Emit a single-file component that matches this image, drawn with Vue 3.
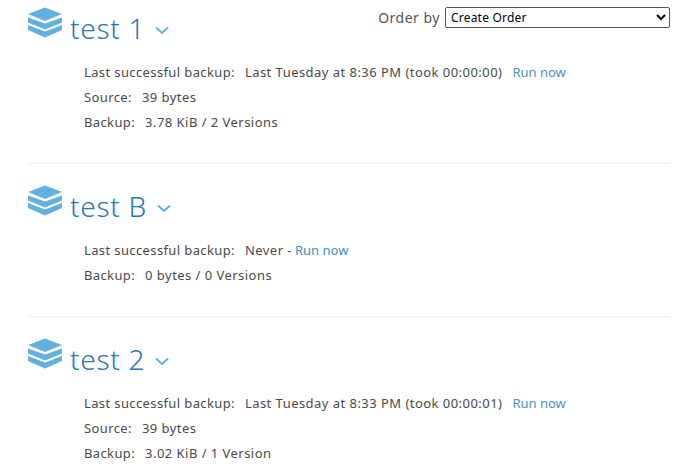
<script setup>
const items = [
  { name: 'test 1', rows: [
    { label: 'Last successful backup:', value: 'Last Tuesday at 8:36 PM (took 00:00:00)', link: true },
    { label: 'Source:', value: '39 bytes' },
    { label: 'Backup:', value: '3.78 KiB / 2 Versions' },
  ] },
  { name: 'test B', rows: [
    { label: 'Last successful backup:', value: 'Never -', link: true, tight: true },
    { label: 'Backup:', value: '0 bytes / 0 Versions' },
  ] },
  { name: 'test 2', rows: [
    { label: 'Last successful backup:', value: 'Last Tuesday at 8:33 PM (took 00:00:01)', link: true },
    { label: 'Source:', value: '39 bytes' },
    { label: 'Backup:', value: '3.02 KiB / 1 Version' },
  ] },
]
</script>

<template>
  <div class="page">
    <div class="order">
      <span class="order-label">Order by</span>
      <select class="order-select"><option>Create Order</option></select>
    </div>
    <section v-for="item in items" :key="item.name" class="item">
      <div class="head">
        <svg class="stack" width="34" height="31" viewBox="0 0 34 31">
          <path d="M17 0.500 L34 7 L17 14 L0 7 Z" fill="#62b0e0" />
          <path d="M0 10.500 L17 16.500 L34 10.500 L34 15.500 L17 22.500 L0 15.500 Z" fill="#62b0e0" />
          <path d="M0 18 L17 24.500 L34 18 L34 23 L17 30.500 L0 23 Z" fill="#62b0e0" />
        </svg>
        <h2 class="title">{{ item.name }}</h2>
        <svg class="chev" width="14" height="9" viewBox="0 0 14 9">
          <path d="M1 1.500 L7 7 L13 1.500" fill="none" stroke="#62b0e0" stroke-width="2" />
        </svg>
      </div>
      <div class="rows">
        <div v-for="row in item.rows" :key="row.label" class="row">
          <span class="label">{{ row.label }}</span>
          <span class="value">{{ row.value }}</span>
          <a v-if="row.link" class="run" :class="{ tight: row.tight }">Run now</a>
        </div>
      </div>
    </section>
  </div>
</template>

<style scoped>
.page {
  position: relative;
  width: 642px;
  height: 472px;
  overflow: hidden;
  padding: 0 4px 0 28px;
  box-sizing: content-box;
  font-family: "Noto Sans", sans-serif;
  color: #4a4a4a;
}
.order {
  position: absolute;
  top: 7px;
  right: 4px;
  display: flex;
  align-items: center;
  gap: 5px;
}
.order-label { font-size: 14px; letter-spacing: 0.5px; color: #555; margin-top: -1px; }
.order-select {
  width: 225px;
  height: 21px;
  font: 12px "Noto Sans", sans-serif;
  letter-spacing: 0.2px;
  color: #000;
  background: #fff;
  border: 1px solid #555;
  border-radius: 2px;
  padding: 0 0 0 1px;
}
.item {
  padding: 19px 0 29px;
  border-bottom: 1px solid #eee;
}
.item:first-of-type { padding-top: 5px; }
.item:last-child { border-bottom: 0; }
.head { display: flex; align-items: flex-start; height: 44px; }
.stack { margin-top: 2px; flex: none; }
.title {
  margin: 5px 0 0 8px;
  font-size: 28px;
  font-weight: 300;
  letter-spacing: 0.7px;
  line-height: 36px;
  color: #2678b0;
}
.chev { margin: 21px 0 0 10px; }
.rows { padding: 10px 0 0 56px; }
.row { display: flex; height: 25px; align-items: center; font-size: 13px; letter-spacing: 0.46px; }
.label { margin-right: 10px; letter-spacing: 0.38px; }
.run { margin-left: 10px; letter-spacing: 0; color: #4f93c0; }
.run.tight { margin-left: 3px; color: #3c8fc4; }
</style>
